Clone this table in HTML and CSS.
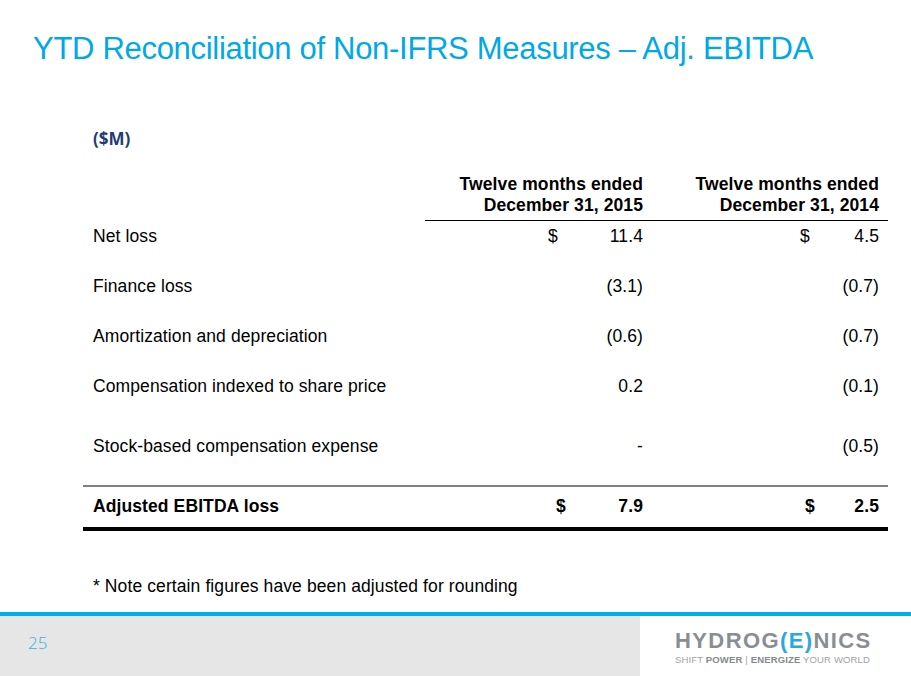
FILE: index.html
```
<!DOCTYPE html>
<html>
<head>
<meta charset="utf-8">
<link rel="stylesheet" href="styles.css">
</head>
<body>
<div class="page">
  <main class="content">
    <h1 class="title">YTD Reconciliation of Non-IFRS Measures – Adj. EBITDA</h1>
    <div class="unit">($M)</div>
    <div class="table">
      <div class="head">
        <div class="label"></div>
        <div class="hcell c1">Twelve months ended<br>December 31, 2015</div>
        <div class="hcell c2">Twelve months ended<br>December 31, 2014</div>
      </div>
      <div class="row first">
        <div class="label">Net loss</div>
        <div class="cell c1"><span class="money m1"><span>$</span><span>11.4</span></span></div>
        <div class="cell c2"><span class="money m2"><span>$</span><span>4.5</span></span></div>
      </div>
      <div class="row">
        <div class="label">Finance loss</div>
        <div class="cell c1">(3.1)</div>
        <div class="cell c2">(0.7)</div>
      </div>
      <div class="row">
        <div class="label">Amortization and depreciation</div>
        <div class="cell c1">(0.6)</div>
        <div class="cell c2">(0.7)</div>
      </div>
      <div class="row">
        <div class="label">Compensation indexed to share price</div>
        <div class="cell c1">0.2</div>
        <div class="cell c2">(0.1)</div>
      </div>
      <div class="row tall">
        <div class="label">Stock-based compensation expense</div>
        <div class="cell c1">-</div>
        <div class="cell c2">(0.5)</div>
      </div>
      <div class="total">
        <div class="label">Adjusted EBITDA loss</div>
        <div class="cell c1"><span class="money t1"><span>$</span><span>7.9</span></span></div>
        <div class="cell c2"><span class="money t2"><span>$</span><span>2.5</span></span></div>
      </div>
    </div>
    <p class="note">* Note certain figures have been adjusted for rounding</p>
  </main>
  <footer class="footer">
    <div class="footer-left"><span class="pagenum">25</span></div>
    <div class="footer-right">
      <div class="logo">
        <div class="wordmark">HYDROG<span class="e">(E)</span>NICS</div>
        <div class="tagline">SHIFT <b>POWER</b> | <b>ENERGIZE</b> YOUR WORLD</div>
      </div>
    </div>
  </footer>
</div>
</body>
</html>
```
FILE: styles.css
```
* { box-sizing: border-box; }
html, body { margin: 0; padding: 0; background: #fff; }
body { font-family: "Liberation Sans", Arial, sans-serif; color: #000; }

.page {
  width: 911px;
  height: 676px;
  display: flex;
  flex-direction: column;
  overflow: hidden;
}

.content { flex: 1; }

.title {
  margin: 32px 0 0 33px;
  font-weight: normal;
  font-size: 31px;
  line-height: 34px;
  color: #00a8e6;
  letter-spacing: -0.3px;
  white-space: nowrap;
}

.unit {
  margin: 63px 0 0 93px;
  font-family: "Open Sans", "Liberation Sans", sans-serif;
  font-weight: bold;
  font-size: 17px;
  line-height: 20px;
  color: #1f3c73;
}

.table {
  margin: 25px 0 0 83px;
  width: 805px;
  font-size: 17.5px;
  letter-spacing: 0.1px;
}

.head, .row, .total {
  display: grid;
  grid-template-columns: 342px 218px 245px;
}

.head .hcell {
  font-weight: bold;
  line-height: 21px;
  text-align: right;
  padding-bottom: 4px;
  border-bottom: 1px solid #000;
  white-space: nowrap;
}
.hcell.c2 { padding-right: 9px; }

.label { padding-left: 10px; white-space: nowrap; }

.row { line-height: 20px; margin-top: 30px; }
.row.first { margin-top: 5px; }
.row.tall { margin-top: 40px; }

.cell { text-align: right; }
.cell.c2 { padding-right: 9px; }

.money { display: inline-flex; justify-content: space-between; }
.m1 { width: 95px; }
.m2 { width: 79px; }
.t1 { width: 87px; }
.t2 { width: 74px; }

.total {
  margin-top: 29px;
  border-top: 2px solid #7f7f7f;
  border-bottom: 4px solid #000;
  padding: 9px 0 11px;
  line-height: 20px;
  font-weight: bold;
}

.note {
  margin: 45px 0 0 93px;
  font-size: 17.5px;
  line-height: 20px;
  letter-spacing: 0.1px;
}

.footer {
  height: 64px;
  border-top: 4px solid #00aeef;
  display: flex;
}

.footer-left {
  width: 640px;
  background: #e6e6e6;
  padding: 17px 0 0 28px;
}

.pagenum {
  font-family: "Open Sans", "Liberation Sans", sans-serif;
  font-weight: 300;
  font-size: 17px;
  color: #2fb2e6;
  line-height: 20px;
}

.footer-right {
  flex: 1;
  padding: 13px 0 0 35px;
}

.wordmark {
  font-weight: bold;
  font-size: 22px;
  line-height: 24px;
  color: #8a8e92;
  letter-spacing: 1.4px;
}
.wordmark .e { color: #2aa9df; }

.tagline {
  margin-top: 1px;
  font-size: 9.5px;
  line-height: 12px;
  color: #a0a3a6;
  letter-spacing: 0.15px;
  white-space: nowrap;
}
.tagline b { color: #85898d; }
```
